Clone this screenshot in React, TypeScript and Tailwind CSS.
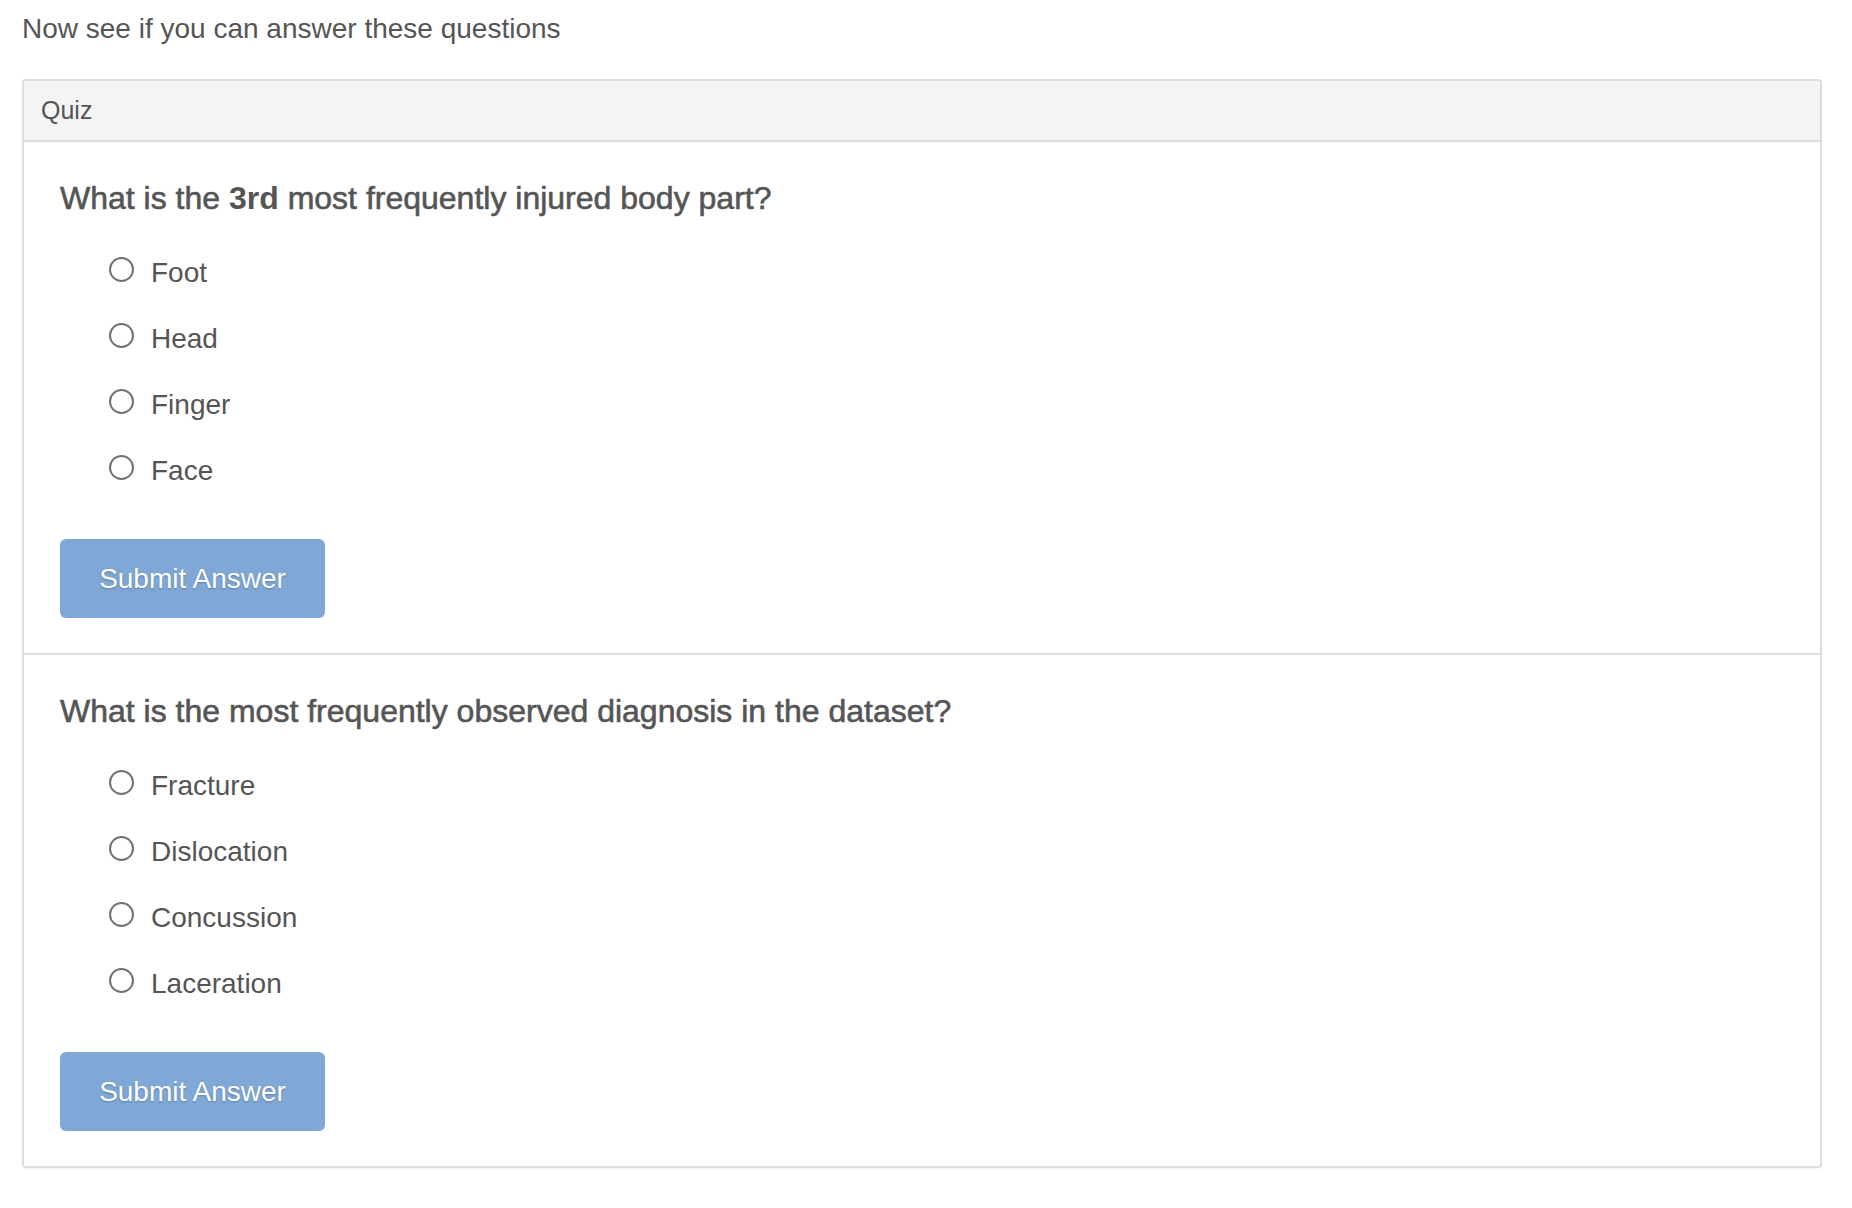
import React from "react";

type Q = { title: React.ReactNode; options: string[] };

const questions: Q[] = [
  {
    title: (
      <>
        What is the <span className="font-bold [-webkit-text-stroke:0px]">3rd</span> most frequently injured body part?
      </>
    ),
    options: ["Foot", "Head", "Finger", "Face"],
  },
  {
    title: <>What is the most frequently observed diagnosis in the dataset?</>,
    options: ["Fracture", "Dislocation", "Concussion", "Laceration"],
  },
];

function Question({ q, idx, last }: { q: Q; idx: number; last: boolean }) {
  return (
    <div className={`pt-[38px] pb-[35px] pl-[36px] ${last ? "" : "border-b-2 border-[#dddddd]"}`}>
      <h4 className="text-[32px] leading-[36px] text-[#555555] [-webkit-text-stroke:0.6px_#555555]">{q.title}</h4>
      <div className="mt-[24px] flex flex-col">
        {q.options.map((o) => (
          <label key={o} className="h-[66px] flex items-center">
            <input
              type="radio"
              name={`q${idx}`}
              className="appearance-none ml-[49px] mb-[8px] w-[25px] h-[25px] rounded-full border-2 border-[#717171] bg-white"
            />
            <span className="ml-[17px] text-[28px] leading-[40px] text-[#555555]">{o}</span>
          </label>
        ))}
      </div>
      <button
        className="mt-[35px] w-[265px] h-[79px] rounded-[6px] bg-[#7fa8d6] text-white text-[28px] [text-shadow:0_1px_2px_rgba(0,0,0,0.25)]"
        disabled
      >
        Submit Answer
      </button>
    </div>
  );
}

export default function App() {
  return (
    <div
      className="min-h-screen bg-white pl-[22px] pr-[30px] pt-[9px]"
      style={{ fontFamily: '"Liberation Sans", Arial, Helvetica, sans-serif' }}
    >
      <p className="text-[28px] leading-[40px] text-[#555555] mb-[30px]">Now see if you can answer these questions</p>
      <div className="border-2 border-[#dddddd] rounded-[4px] shadow-[0_1px_2px_rgba(0,0,0,0.05)]">
        <div className="h-[61px] bg-[#f4f4f4] border-b-2 border-[#dddddd] pl-[17px] flex items-center rounded-t-[3px]">
          <span className="text-[25px] text-[#555555]">Quiz</span>
        </div>
        {questions.map((q, i) => (
          <Question key={i} q={q} idx={i} last={i === questions.length - 1} />
        ))}
      </div>
    </div>
  );
}
